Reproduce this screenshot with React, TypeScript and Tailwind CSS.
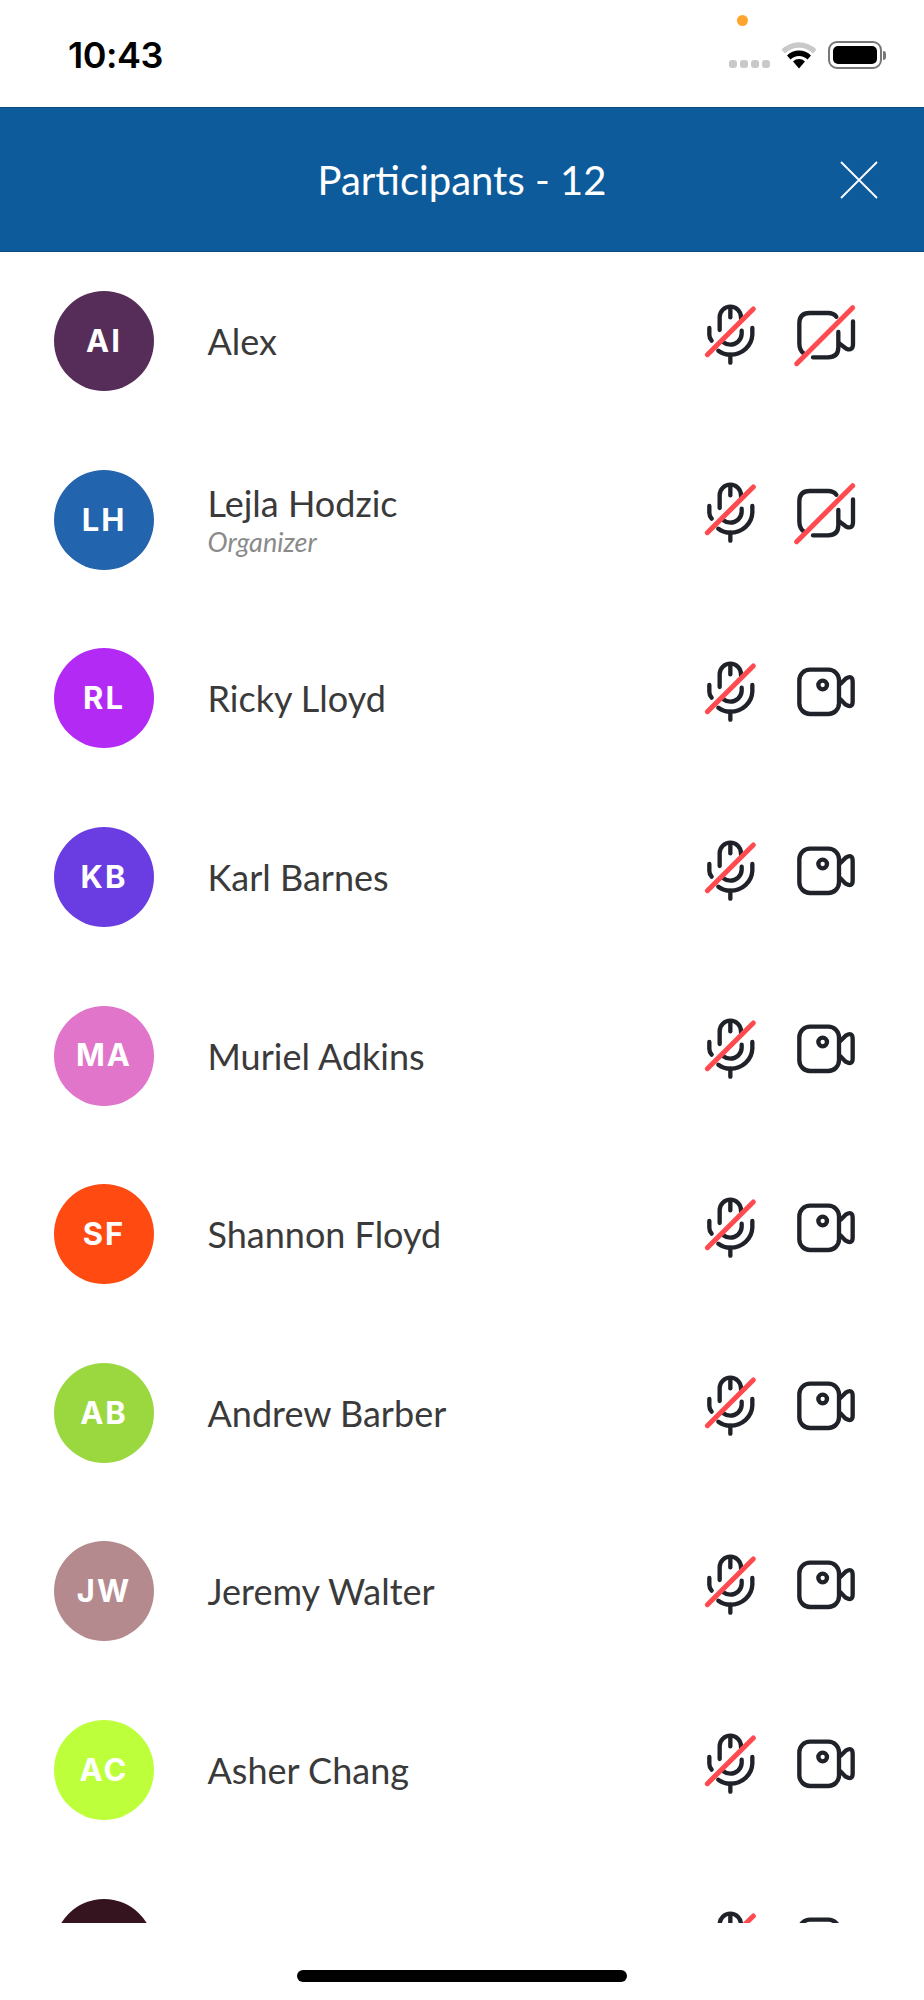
const participants = [
  { initials: "AI", name: "Alex", color: "bg-[#552d58]", videoOff: true },
  { initials: "LH", name: "Lejla Hodzic", role: "Organizer", color: "bg-[#2364ae]", videoOff: true },
  { initials: "RL", name: "Ricky Lloyd", color: "bg-[#b32af5]" },
  { initials: "KB", name: "Karl Barnes", color: "bg-[#6a3de3]" },
  { initials: "MA", name: "Muriel Adkins", color: "bg-[#e075c9]" },
  { initials: "SF", name: "Shannon Floyd", color: "bg-[#ff4a12]" },
  { initials: "AB", name: "Andrew Barber", color: "bg-[#9bd83f]" },
  { initials: "JW", name: "Jeremy Walter", color: "bg-[#b58a8e]" },
  { initials: "AC", name: "Asher Chang", color: "bg-[#beff3c]" },
  { initials: "", name: "", color: "bg-[#35131f]" },
];

const MicMuted = () => (
  <svg className="mt-[3px]" width="55" height="86" viewBox="70 60 165 258" fill="none" strokeLinecap="round" strokeLinejoin="round" strokeWidth="13">
    <g stroke="#1f2228">
      <path d="M120 150V112A32 32 0 0 1 184 112V116" />
      <path d="M152 84V112" />
      <path d="M186 152V162A34 34 0 0 1 152 194Q140 194 130 186" />
      <path d="M89 144V164Q89 174 96 182" />
      <path d="M218 144V164A66 62 0 0 1 152 224Q132 224 116 212" />
      <path d="M152 224V248" />
    </g>
    <path d="M83 224L221 87" stroke="#ff4a50" strokeWidth="15" />
  </svg>
);

const CamOff = () => (
  <svg className="mt-[3px]" width="65" height="86" viewBox="340 60 195 258" fill="none" strokeLinecap="round" strokeLinejoin="round" strokeWidth="13">
    <g stroke="#1f2228">
      <path d="M372 220Q359 212 359 190V130Q359 99 390 99H445Q462 99 470 110" />
      <path d="M400 232H445Q476 232 476 202V156" />
      <path d="M478 190L500 206Q520 214 520 192V124" />
    </g>
    <path d="M351 251L519 83" stroke="#ff4a50" strokeWidth="15" />
  </svg>
);

const CamOn = () => (
  <svg className="mt-[3px]" width="65" height="86" viewBox="340 51 195 258" fill="none" strokeLinecap="round" strokeLinejoin="round" strokeWidth="13">
    <g stroke="#1f2228">
      <rect x="359" y="89" width="119" height="133" rx="32" />
      <circle cx="429" cy="135" r="13" />
      <path d="M482 132L498 116Q519 103 519 126V184Q519 206 498 194L482 178" />
    </g>
  </svg>
);

const StatusIcons = () => (
  <div className="flex items-center gap-[11px] h-[30px]">
    <div className="flex gap-[3px] mt-[18px]">
      <span className="w-[8px] h-[8px] rounded-[3px] bg-[#c9c9c9]" />
      <span className="w-[8px] h-[8px] rounded-[3px] bg-[#c9c9c9]" />
      <span className="w-[8px] h-[8px] rounded-[3px] bg-[#c9c9c9]" />
      <span className="w-[8px] h-[8px] rounded-[3px] bg-[#c9c9c9]" />
    </div>
    <svg width="36" height="28" viewBox="0 0 36 28">
      <path d="M0.5 8.5A25 25 0 0 1 35.5 8.5L32 12.5A20 20 0 0 0 4 12.5Z" fill="#c9c9c9" />
      <path d="M6 14.5A17 17 0 0 1 30 14.5L26.5 18.5A12 12 0 0 0 9.5 18.5Z" fill="#000" />
      <path d="M12 20.5A8.5 8.5 0 0 1 24 20.5L18 27.5Z" fill="#000" />
    </svg>
    <div className="flex items-center gap-[1px]">
      <div className="w-[54px] h-[28px] rounded-[9px] border-2 border-[#777] p-[3px] bg-white">
        <div className="w-full h-full rounded-[5px] bg-black" />
      </div>
      <div className="w-[3px] h-[9px] rounded-r-full bg-[#777]" />
    </div>
  </div>
);

const App = () => {
  return (
    <div className="relative flex flex-col h-[2000px] w-[924px] bg-white font-['Lato','Noto_Sans',sans-serif]">
      <div className="relative flex items-center justify-between h-[107px] pl-[68px] pr-[38px] pt-[3px] bg-white">
        <span className="text-[36px] leading-none font-semibold tracking-[-0.5px] text-black font-['Inter',sans-serif]">10:43</span>
        <StatusIcons />
        <span className="absolute left-[737px] top-[15px] w-[11px] h-[11px] rounded-full bg-[#ffa52e]" />
      </div>

      <header className="relative flex items-center justify-center h-[145px] bg-[#0e5b9b] border-y border-[#0a4a80]">
        <h1 className="text-[40px] font-normal leading-none text-white">Participants - 12</h1>
        <svg className="absolute left-[840px] top-[53px]" width="38" height="38" viewBox="0 0 38 38" fill="none" stroke="#fff" strokeWidth="1.8">
          <path d="M1 1L37 37M37 1L1 37" />
        </svg>
      </header>

      <ul className="h-[1671px] overflow-hidden">
        {participants.map((p, i) => (
          <li key={i} className="flex items-center h-[178.6px] pl-[54px] pr-[65.67px]">
            <div className={`flex items-center justify-center shrink-0 w-[100px] h-[100px] rounded-full ${p.color}`}>
              <span className="text-[31px] font-bold tracking-[2px] text-white font-['Inter',sans-serif]">{p.initials}</span>
            </div>
            <div className="flex-1 min-w-0 pl-[53.5px]">
              <p className="text-[36px] leading-[42px] text-[#3a3a3a]">{p.name}</p>
              {p.role && <p className="text-[27px] leading-[30px] italic text-[#8a8a8a] mt-[3px]">{p.role}</p>}
            </div>
            <div className="flex items-center gap-[35px]">
              <MicMuted />
              {p.videoOff ? <CamOff /> : <CamOn />}
            </div>
          </li>
        ))}
      </ul>

      <div className="flex-1 flex justify-center pt-[47px]">
        <div className="w-[330px] h-[12px] rounded-full bg-black" />
      </div>
    </div>
  );
};

export default App;
